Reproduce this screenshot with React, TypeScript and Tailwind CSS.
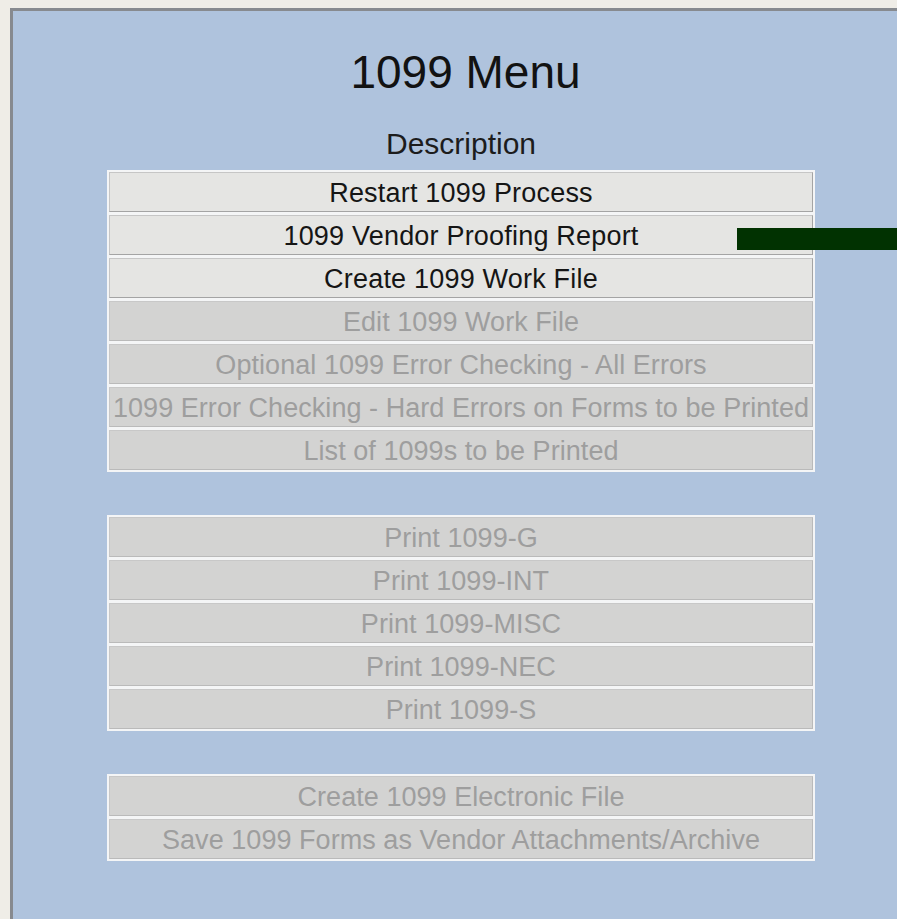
import React from 'react';

type MenuItem = {
  label: string;
  enabled?: boolean;
};

const groups: MenuItem[][] = [
  [
    { label: 'Restart 1099 Process', enabled: true },
    { label: '1099 Vendor Proofing Report', enabled: true },
    { label: 'Create 1099 Work File', enabled: true },
    { label: 'Edit 1099 Work File' },
    { label: 'Optional 1099 Error Checking - All Errors' },
    { label: '1099 Error Checking - Hard Errors on Forms to be Printed' },
    { label: 'List of 1099s to be Printed' },
  ],
  [
    { label: 'Print 1099-G' },
    { label: 'Print 1099-INT' },
    { label: 'Print 1099-MISC' },
    { label: 'Print 1099-NEC' },
    { label: 'Print 1099-S' },
  ],
  [
    { label: 'Create 1099 Electronic File' },
    { label: 'Save 1099 Forms as Vendor Attachments/Archive' },
  ],
];

function MenuButton({ label, enabled }: MenuItem) {
  return (
    <button
      disabled={!enabled}
      className={
        enabled
          ? 'h-[40px] w-full border border-[#c6c6c6] border-b-[#a4a4a4] border-r-[#a4a4a4] bg-[#e5e5e3] pt-[3px] text-[27px] leading-[35px] tracking-[0.2px] text-[#151515] whitespace-nowrap'
          : 'h-[40px] w-full border border-[#c8c8c8] border-b-[#bababa] border-r-[#bababa] bg-[#d3d3d2] pt-[3px] text-[27px] leading-[35px] tracking-[0.05px] text-[#9e9e9e] whitespace-nowrap'
      }
    >
      {label}
    </button>
  );
}

function MenuGroup({ items }: { items: MenuItem[] }) {
  return (
    <div className="flex w-[708px] flex-col gap-[3px] bg-[#f4f5f6] p-[2px]">
      {items.map((item) => (
        <MenuButton key={item.label} {...item} />
      ))}
    </div>
  );
}

export default function App() {
  return (
    <div
      className="relative h-[919px] w-[897px] overflow-hidden bg-[#efede7] pl-[10px] pt-[8px]"
      style={{ fontFamily: '"Liberation Sans", Arial, sans-serif' }}
    >
      <div className="h-full border-l-[3px] border-t-[3px] border-[#878a8f] bg-[#afc3dd] pl-[94px] pt-[38px]">
        <div className="flex w-[708px] flex-col items-center">
          <h1 className="ml-[9px] text-[46px] leading-[46px] text-[#121212]">1099 Menu</h1>
          <div className="mt-[34px] text-[30px] leading-[30px] text-[#1c1c1c]">Description</div>
          <div className="mt-[11px] flex flex-col gap-[43px]">
            {groups.map((items, i) => (
              <MenuGroup key={i} items={items} />
            ))}
          </div>
        </div>
      </div>

      {/* pointer bar beside the proofing report */}
      <div className="absolute left-[737px] top-[228px] h-[22px] w-[160px] bg-[#013201]" />
    </div>
  );
}
